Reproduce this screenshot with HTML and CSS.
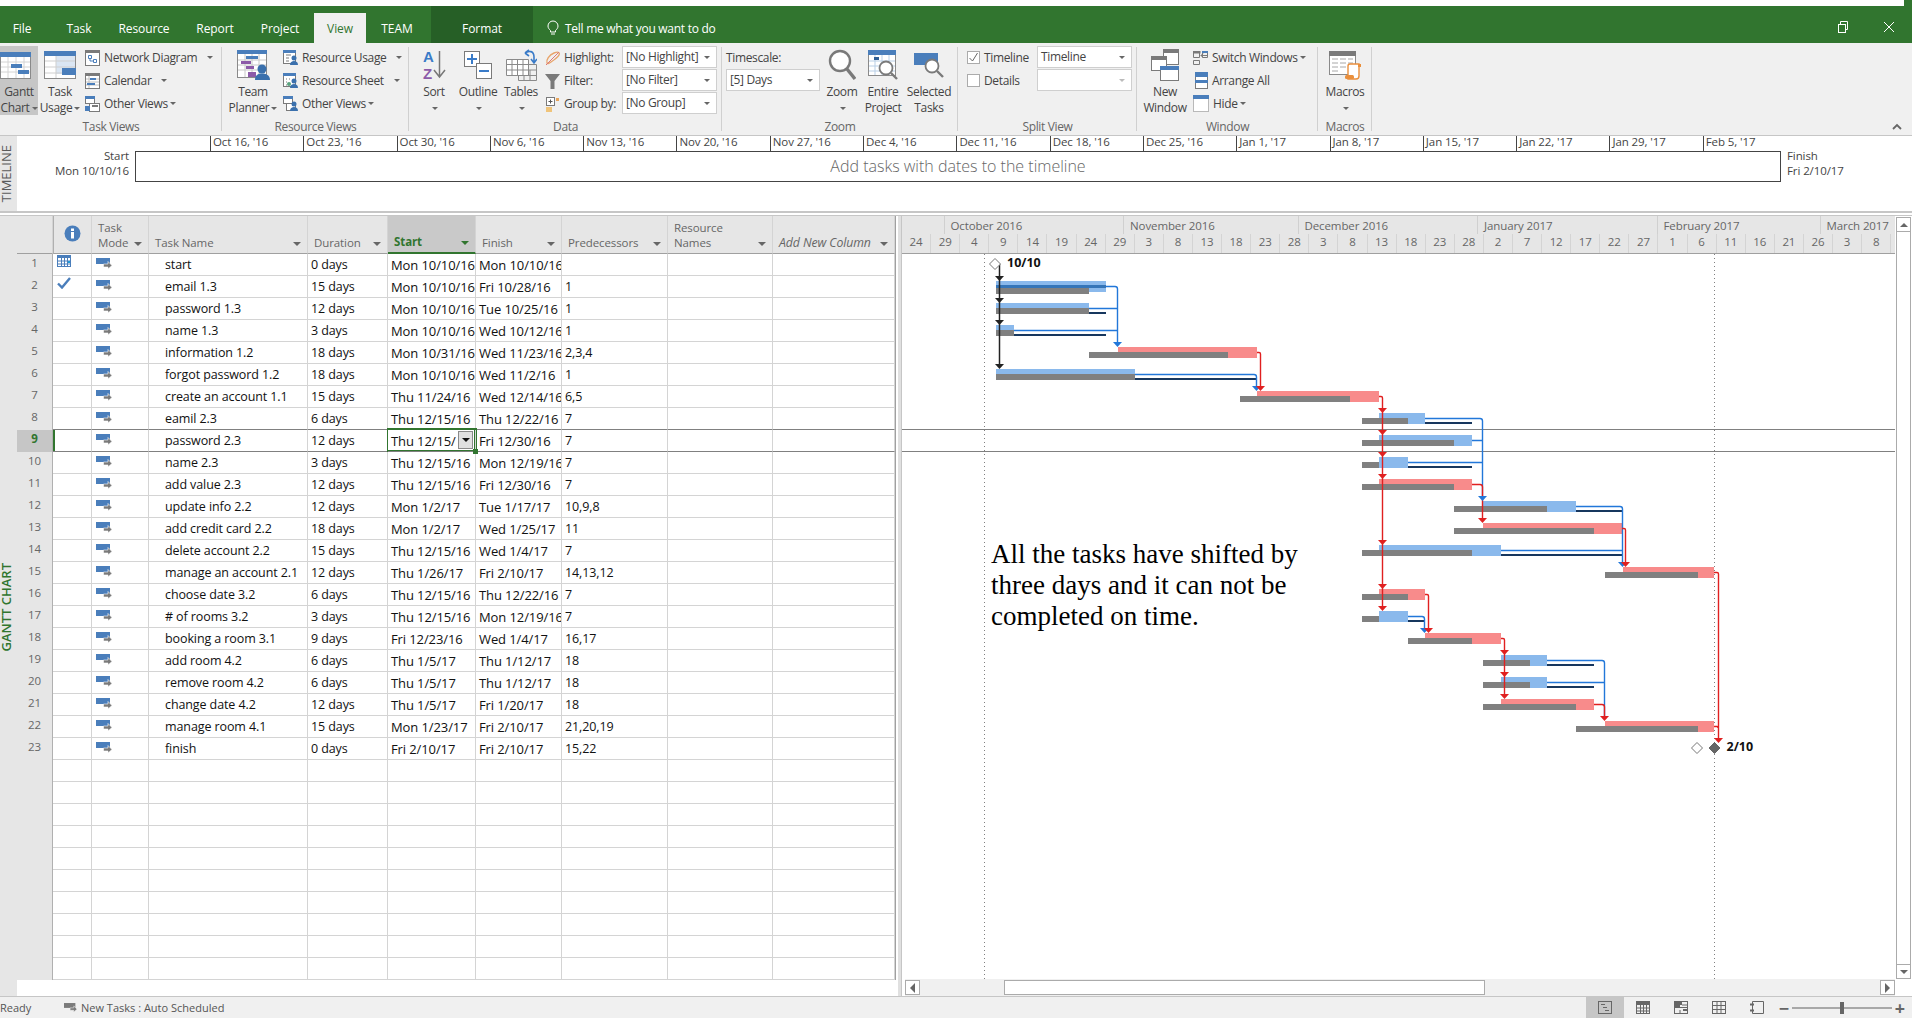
FILE: index.html
```html
<!DOCTYPE html>
<html lang="en">
<head>
<meta charset="utf-8">
<title>Project - Gantt Chart</title>
<link rel="stylesheet" href="styles.css">
</head>
<body>
<svg class="defs" width="0" height="0">
  <symbol id="mode" viewBox="0 0 16 11"><rect width="14" height="6" fill="#4a7ebb"/><path d="M7.500 6h4.500V3.500L16 7.500l-4 3.500V9H7.500z" fill="#7a7a7a" stroke="#fff" stroke-width=".6"/></symbol>
</svg>

<header class="titlebar">
  <div class="topstrip"></div>
  <nav class="tabs">
    <span class="tab t-file">File</span>
    <span class="tab t-task">Task</span>
    <span class="tab t-res">Resource</span>
    <span class="tab t-report">Report</span>
    <span class="tab t-project">Project</span>
    <span class="tab t-view">View</span>
    <span class="tab t-team">TEAM</span>
    <span class="tab t-format">Format</span>
    <span class="tell">
      <svg width="12" height="16" viewBox="0 0 12 16" fill="none" stroke="#fff"><path d="M3.500 10.500C2 9 1 8 1 6a5 5 0 0 1 10 0c0 2-1 3-2.500 4.500v1.500h-5zM4 14h4"/></svg>
      Tell me what you want to do
    </span>
    <span class="winbtns">
      <svg width="12" height="12" viewBox="0 0 12 12" fill="none" stroke="#fff"><rect x="1.500" y="3.500" width="7" height="8"/><path d="M3.500 3.500v-3h7v8h-2"/></svg>
      <svg width="12" height="12" viewBox="0 0 12 12" fill="none" stroke="#fff"><path d="M1 1l10 10M11 1L1 11"/></svg>
    </span>
  </nav>
</header>

<section class="ribbon">
  <div class="grp g1">
    <div class="grp-body">
      <div class="big b-gantt active">
        <div class="ico ico-left"><svg width="31" height="27" viewBox="0 0 31 27"><rect x=".5" y=".5" width="30" height="26" fill="#fff" stroke="#8a8a8a"/><path d="M1 10h29M1 15h29M1 20h29M8 5v21M16 5v21M24 5v21" stroke="#d4d4d4"/><rect width="31" height="5" fill="#4a7ebb"/><rect x="11" y="12" width="11" height="4" fill="#4a7ebb"/><rect x="18" y="18" width="11" height="4" fill="#4a7ebb"/></svg></div>
        <span>Gantt</span><span>Chart<i class="caret"></i></span>
      </div>
      <div class="big b-usage">
        <div class="ico"><svg width="32" height="28" viewBox="0 0 32 28"><rect x=".5" y=".5" width="31" height="27" fill="#fff" stroke="#8a8a8a"/><rect x="12" y="5" width="19" height="18" fill="#dbe6f3"/><path d="M1 10h30M1 16h30M1 22h30M12 5v22" stroke="#cfcfcf"/><rect width="32" height="5" fill="#4a7ebb"/><rect x="18" y="17" width="14" height="7" fill="#4a7ebb"/></svg></div>
        <span>Task</span><span>Usage<i class="caret"></i></span>
      </div>
      <div class="col c-views">
        <div class="sm"><svg class="si" width="15" height="16" viewBox="0 0 15 16"><rect x=".5" y=".5" width="14" height="15" fill="#fff" stroke="#7a7a7a"/><rect width="15" height="3" fill="#7a7a7a"/><path d="M3.500 5.500h3v3h-3zM8.500 9.500h3v3h-3zM5 8.500v2.500h3.500" fill="none" stroke="#4a7ebb"/></svg><span>Network Diagram</span><i class="caret cg"></i></div>
        <div class="sm"><svg class="si" width="15" height="16" viewBox="0 0 15 16"><rect x=".5" y=".5" width="14" height="15" fill="#fff" stroke="#7a7a7a"/><rect width="15" height="3" fill="#7a7a7a"/><path d="M1 6h13M1 9h13M1 12h13M4 3v12" stroke="#c0c0c0"/><rect x="5" y="5" width="6" height="2" fill="#4a7ebb"/><rect x="2" y="10" width="8" height="2" fill="#4a7ebb"/></svg><span>Calendar</span><i class="caret cg"></i></div>
        <div class="sm"><svg class="si" width="15" height="16" viewBox="0 0 15 16"><rect x=".5" y=".5" width="9" height="7" fill="#fff" stroke="#7a7a7a"/><rect width="10" height="3" fill="#4a7ebb"/><rect x="4.500" y="7.500" width="10" height="8" fill="#fff" stroke="#7a7a7a"/><rect x="7" y="9" width="6" height="2" fill="#7a7a7a"/><rect y="10" width="5" height="5" fill="#4a7ebb"/></svg><span>Other Views</span><i class="caret"></i></div>
      </div>
    </div>
    <div class="grp-label">Task Views</div>
  </div>

  <div class="grp g2">
    <div class="grp-body">
      <div class="big b-team">
        <div class="ico"><svg width="33" height="30" viewBox="0 0 33 30"><rect x=".5" y=".5" width="29" height="27" fill="#fff" stroke="#8a8a8a"/><path d="M1 10h28M1 15h28M1 20h28M8 4v23M15 4v23M22 4v23" stroke="#c8c8c8"/><rect width="30" height="4" fill="#4a7ebb"/><rect x="9" y="6" width="12" height="3" fill="#4a7ebb"/><rect x="4" y="11" width="10" height="3" fill="#8c5aa8"/><rect x="9" y="16" width="8" height="3" fill="#8c5aa8"/><rect x="11" y="22" width="8" height="5" fill="#8c5aa8"/><circle cx="25" cy="19" r="4.500" fill="#3a70ad"/><path d="M18 30c0-5 3-6.500 7-6.500s8 1.500 8 6.500z" fill="#3a70ad"/></svg></div>
        <span>Team</span><span>Planner<i class="caret"></i></span>
      </div>
      <div class="col c-res">
        <div class="sm"><svg class="si" width="15" height="16" viewBox="0 0 15 16"><rect x=".5" y=".5" width="12" height="13" fill="#fff" stroke="#7a7a7a"/><rect width="13" height="3" fill="#4a7ebb"/><path d="M3 5h5M3 8h3M3 11h3" stroke="#7a7a7a"/><circle cx="11" cy="8" r="2.500" fill="#3a70ad"/><path d="M7 15c0-3 2-4 4-4s4 1 4 4z" fill="#3a70ad"/></svg><span>Resource Usage</span><i class="caret cg"></i></div>
        <div class="sm"><svg class="si" width="15" height="16" viewBox="0 0 15 16"><rect x=".5" y=".5" width="12" height="13" fill="#fff" stroke="#7a7a7a"/><rect width="13" height="3" fill="#4a7ebb"/><path d="M3 6h1M6 6h1M3 9h1M3 12h1" stroke="#7a7a7a"/><circle cx="11" cy="8" r="2.500" fill="#3a70ad"/><path d="M7 15c0-3 2-4 4-4s4 1 4 4z" fill="#3a70ad"/><circle cx="6" cy="11" r="2" fill="#5aa37f"/></svg><span>Resource Sheet</span><i class="caret cg"></i></div>
        <div class="sm"><svg class="si" width="15" height="16" viewBox="0 0 15 16"><rect x=".5" y=".5" width="9" height="7" fill="#fff" stroke="#7a7a7a"/><rect width="10" height="3" fill="#4a7ebb"/><rect x="3.500" y="7.500" width="9" height="7" fill="#fff" stroke="#7a7a7a"/><circle cx="11" cy="8" r="2.500" fill="#3a70ad"/><path d="M7 15c0-3 2-4 4-4s4 1 4 4z" fill="#3a70ad"/></svg><span>Other Views</span><i class="caret"></i></div>
      </div>
    </div>
    <div class="grp-label">Resource Views</div>
  </div>

  <div class="grp g3">
    <div class="grp-body">
      <div class="big b-sort">
        <div class="ico"><svg class="az-svg" width="24" height="30" viewBox="0 0 24 30"><path d="M17.500 1v25M12 20l5.500 7 5.500-7" fill="none" stroke="#777" stroke-width="1.500"/><text class="az az-a" x="1" y="12">A</text><text class="az az-z" x="1" y="29">Z</text></svg></div>
        <span>Sort</span><span><i class="caret"></i></span>
      </div>
      <div class="big b-outline">
        <div class="ico"><svg width="28" height="28" viewBox="0 0 28 28"><rect x=".5" y=".5" width="15" height="15" fill="#fff" stroke="#7a7a7a"/><rect x="12.500" y="12.500" width="15" height="15" fill="#fff" stroke="#7a7a7a"/><path d="M3 8h10M8 3v10" stroke="#3a7bc8" stroke-width="2"/><path d="M15 20h10" stroke="#3a7bc8" stroke-width="2"/></svg></div>
        <span>Outline</span><span><i class="caret"></i></span>
      </div>
      <div class="big b-tables">
        <div class="ico"><svg width="31" height="32" viewBox="0 0 31 32"><path d="M.5 10.500h22v16h-22zM6 10.500v16M11.500 10.500v16M17 10.500v16M.5 15.500h22M.5 21h22" fill="#fff" stroke="#8a8a8a"/><path d="M12.500 26.500v5h18v-16h-8M18 26.500v5M24 21v10M22.500 21h8M12.500 26.500h18" fill="none" stroke="#8a8a8a"/><path d="M19 4c4-3 9-2 9 4v5M25 10l3 4 3-4M19 4l4-3M19 4l4 3" fill="none" stroke="#3a7bc8" stroke-width="1.600"/></svg></div>
        <span>Tables</span><span><i class="caret"></i></span>
      </div>
      <div class="data">
        <div class="data-row"><svg class="si" width="16" height="16" viewBox="0 0 16 16"><path d="M2 13C1 10 4 5 9 3s6 0 5 2-5 5-8 7-3 2-4 1z" fill="none" stroke="#e8a46a" stroke-width="1.400"/><path d="M1 15L14 2" stroke="#d77" stroke-width="1"/></svg><span class="data-l">Highlight:</span><div class="combo">[No Highlight]<i class="caret cr"></i></div></div>
        <div class="data-row"><svg class="si" width="16" height="16" viewBox="0 0 16 16"><path d="M0 1h15L9.500 8v8h-4V8z" fill="#7a7a7a"/></svg><span class="data-l">Filter:</span><div class="combo">[No Filter]<i class="caret cr"></i></div></div>
        <div class="data-row"><svg class="si" width="16" height="16" viewBox="0 0 16 16"><rect x="1.500" y="1.500" width="8" height="8" fill="#fff" stroke="#7a7a7a"/><path d="M3.500 5.500h4M5.500 3.500v4" stroke="#555"/><rect x="11" y="2" width="3" height="3" fill="#e8a45a"/><rect x="1" y="11" width="6" height="5" fill="#f0c47a"/></svg><span class="data-l">Group by:</span><div class="combo">[No Group]<i class="caret cr"></i></div></div>
      </div>
    </div>
    <div class="grp-label">Data</div>
  </div>

  <div class="grp g4">
    <div class="grp-body">
      <div class="col c-time">
        <div class="sm">Timescale:</div>
        <div class="combo cw">[5] Days<i class="caret cr"></i></div>
      </div>
      <div class="big b-zoom">
        <div class="ico"><svg width="28" height="32" viewBox="0 0 28 32" fill="none"><circle cx="12" cy="12" r="10" fill="#fff" stroke="#7a7a7a" stroke-width="2.400"/><path d="M19 20l8 10" stroke="#7a7a7a" stroke-width="3.400"/></svg></div>
        <span>Zoom</span><span><i class="caret"></i></span>
      </div>
      <div class="big b-entire">
        <div class="ico"><svg width="30" height="30" viewBox="0 0 30 30"><rect x=".5" y=".5" width="27" height="25" fill="#fff" stroke="#8a8a8a"/><path d="M1 11h26M1 16h26M1 21h26M7 5v20M14 5v20M21 5v20" stroke="#b9cfe6"/><rect width="28" height="5" fill="#4a7ebb"/><rect x="6" y="7" width="5" height="3" fill="#2f5f96"/><circle cx="18" cy="18" r="6.500" fill="#fff" stroke="#7a7a7a" stroke-width="1.800"/><path d="M23 23l6 6" stroke="#7a7a7a" stroke-width="2.400"/></svg></div>
        <span>Entire</span><span>Project</span>
      </div>
      <div class="big b-sel">
        <div class="ico"><svg width="30" height="25" viewBox="0 0 30 25"><rect width="24" height="12" fill="#4a7ebb"/><circle cx="18" cy="13" r="6.500" fill="#fff" stroke="#7a7a7a" stroke-width="1.800"/><path d="M23 18l6 6" stroke="#7a7a7a" stroke-width="2.400"/></svg></div>
        <span>Selected</span><span>Tasks</span>
      </div>
    </div>
    <div class="grp-label">Zoom</div>
  </div>

  <div class="grp g5">
    <div class="grp-body">
      <div class="split-grid">
        <div class="chk-row"><span class="chk"><svg width="11" height="11" viewBox="0 0 11 11" fill="none" stroke="#666"><path d="M1.500 6l3 3 5-8"/></svg></span><span class="chk-l">Timeline</span><div class="combo">Timeline<i class="caret cr"></i></div></div>
        <div class="chk-row"><span class="chk"></span><span class="chk-l">Details</span><div class="combo"><i class="caret cr dim"></i></div></div>
      </div>
    </div>
    <div class="grp-label">Split View</div>
  </div>

  <div class="grp g6">
    <div class="grp-body">
      <div class="big b-new">
        <div class="ico"><svg width="28" height="32" viewBox="0 0 28 32"><rect x="12.500" y=".5" width="15" height="15" fill="#fff" stroke="#7a7a7a"/><rect x="12" width="16" height="4" fill="#7a7a7a"/><rect x=".5" y="7.500" width="15" height="14" fill="#fff" stroke="#7a7a7a"/><rect y="7" width="16" height="4" fill="#7a7a7a"/><rect x="9.500" y="17.500" width="18" height="14" fill="#fff" stroke="#7a7a7a"/><rect x="9" y="17" width="19" height="4" fill="#4a7ebb"/></svg></div>
        <span>New</span><span>Window</span>
      </div>
      <div class="col c-win">
        <div class="sm"><svg class="si" width="15" height="14" viewBox="0 0 15 14" fill="none" stroke="#7a7a7a"><path d="M.5.500h6v6h-6zM9.500.500h5v6h-5zM.5 9.500h6v4h-6zM8 4.500h6M8 4.500l2-2M8 4.500l2 2"/><rect x="0" y="0" width="7" height="2" fill="#7a7a7a"/><rect x="9" y="0" width="6" height="2" fill="#4a7ebb" stroke="none"/></svg><span>Switch Windows</span><i class="caret"></i></div>
        <div class="sm"><svg class="si" width="15" height="17" viewBox="0 0 15 17"><rect x="2.500" y=".5" width="12" height="16" fill="#fff" stroke="#7a7a7a"/><rect x="2" width="13" height="5" fill="#4a7ebb"/><rect x="2" y="8" width="13" height="3" fill="#4a7ebb"/></svg><span>Arrange All</span></div>
        <div class="sm"><svg class="si" width="16" height="17" viewBox="0 0 16 17"><rect x=".5" y=".5" width="15" height="16" fill="#fff" stroke="#7a7a7a" stroke-dasharray="1 1"/><rect width="16" height="4" fill="#4a7ebb"/></svg><span>Hide</span><i class="caret"></i></div>
      </div>
    </div>
    <div class="grp-label">Window</div>
  </div>

  <div class="grp g7">
    <div class="grp-body">
      <div class="big b-macros">
        <div class="ico"><svg width="32" height="29" viewBox="0 0 32 29"><rect x=".5" y=".5" width="26" height="23" fill="#fff" stroke="#8a8a8a"/><rect width="27" height="5" fill="#7a7a7a"/><path d="M3 8h6M11 8h6M19 8h5M3 12h6M11 12h6M19 12h5M3 16h6M11 16h6M3 20h6" stroke="#a8a8a8"/><path d="M19 15a2 2 0 0 1 2-2h9v12a3 3 0 0 1-3 3h-8z" fill="#fff" stroke="#ea8f3c" stroke-width="1.400"/><rect x="16" y="24" width="9" height="4" rx="1.500" fill="#ea8f3c"/><rect x="29" y="13" width="3" height="3" fill="#ea8f3c"/></svg></div>
        <span>Macros</span><span><i class="caret"></i></span>
      </div>
    </div>
    <div class="grp-label">Macros</div>
  </div>

  <svg class="collapse" width="10" height="7" viewBox="0 0 10 7" fill="none" stroke="#666" stroke-width="1.800"><path d="M1 6l4-4 4 4"/></svg>
</section>

<section class="timeline">
  <div class="strip"><span class="vert">TIMELINE</span></div>
  <div class="tl-body">
    <div class="tl-scale">
      <span>Oct 16, '16</span><span>Oct 23, '16</span><span>Oct 30, '16</span><span>Nov 6, '16</span><span>Nov 13, '16</span><span>Nov 20, '16</span><span>Nov 27, '16</span><span>Dec 4, '16</span><span>Dec 11, '16</span><span>Dec 18, '16</span><span>Dec 25, '16</span><span>Jan 1, '17</span><span>Jan 8, '17</span><span>Jan 15, '17</span><span>Jan 22, '17</span><span>Jan 29, '17</span><span>Feb 5, '17</span>
    </div>
    <div class="tl-row">
      <div class="tl-start">Start<br>Mon 10/10/16</div>
      <div class="tl-box">Add tasks with dates to the timeline</div>
      <div class="tl-end">Finish<br>Fri 2/10/17</div>
    </div>
  </div>
</section>

<main class="main">
  <div class="strip strip-g"><span class="vert green">GANTT CHART</span></div>
  <div class="sheet">
    <table class="grid">
      <colgroup><col class="w-num"><col class="w-ind"><col class="w-mode"><col class="w-name"><col class="w-dur"><col class="w-start"><col class="w-fin"><col class="w-pred"><col class="w-res"><col class="w-add"></colgroup>
      <thead>
        <tr>
          <th></th>
          <th class="c"><svg width="17" height="17" viewBox="0 0 17 17"><circle cx="8.500" cy="8.500" r="8" fill="#4a7ebb"/><rect x="7" y="7" width="3" height="6.500" fill="#fff"/><rect x="7" y="3.500" width="3" height="2.500" fill="#fff"/></svg></th>
          <th class="wrap"><div class="hd">Task<br>Mode<i class="hc"></i></div></th>
          <th><div class="hd">Task Name<i class="hc"></i></div></th>
          <th><div class="hd">Duration<i class="hc"></i></div></th>
          <th class="sel"><div class="hd">Start<i class="hc hcg"></i></div></th>
          <th><div class="hd">Finish<i class="hc"></i></div></th>
          <th><div class="hd">Predecessors<i class="hc"></i></div></th>
          <th class="wrap"><div class="hd">Resource<br>Names<i class="hc"></i></div></th>
          <th><div class="hd"><em>Add New Column</em><i class="hc"></i></div></th>
        </tr>
      </thead>
      <tbody>
        <tr><td class="n">1</td><td class="ind"><svg width="14" height="12" viewBox="0 0 14 12"><rect x=".5" y=".5" width="13" height="11" fill="#fff" stroke="#4a7ebb"/><rect width="14" height="3" fill="#4a7ebb"/><path d="M4.500 3v8M7.500 3v8M10.500 3v8M1 6h12M1 9h12" stroke="#4a7ebb"/><rect x="11" y="6" width="2" height="2" fill="#1f9ad6"/></svg></td><td class="m"><svg class="mi"><use href="#mode"/></svg></td><td class="t">start</td><td>0 days</td><td>Mon 10/10/16</td><td>Mon 10/10/16</td><td></td><td></td><td></td></tr>
        <tr><td class="n">2</td><td class="ind"><svg width="14" height="12" viewBox="0 0 14 12" fill="none" stroke="#4a7ebb" stroke-width="2.400"><path d="M1 6.500l4 4 8-9.500"/></svg></td><td class="m"><svg class="mi"><use href="#mode"/></svg></td><td class="t">email 1.3</td><td>15 days</td><td>Mon 10/10/16</td><td>Fri 10/28/16</td><td>1</td><td></td><td></td></tr>
        <tr><td class="n">3</td><td></td><td class="m"><svg class="mi"><use href="#mode"/></svg></td><td class="t">password 1.3</td><td>12 days</td><td>Mon 10/10/16</td><td>Tue 10/25/16</td><td>1</td><td></td><td></td></tr>
        <tr><td class="n">4</td><td></td><td class="m"><svg class="mi"><use href="#mode"/></svg></td><td class="t">name 1.3</td><td>3 days</td><td>Mon 10/10/16</td><td>Wed 10/12/16</td><td>1</td><td></td><td></td></tr>
        <tr><td class="n">5</td><td></td><td class="m"><svg class="mi"><use href="#mode"/></svg></td><td class="t">information 1.2</td><td>18 days</td><td>Mon 10/31/16</td><td>Wed 11/23/16</td><td>2,3,4</td><td></td><td></td></tr>
        <tr><td class="n">6</td><td></td><td class="m"><svg class="mi"><use href="#mode"/></svg></td><td class="t">forgot password 1.2</td><td>18 days</td><td>Mon 10/10/16</td><td>Wed 11/2/16</td><td>1</td><td></td><td></td></tr>
        <tr><td class="n">7</td><td></td><td class="m"><svg class="mi"><use href="#mode"/></svg></td><td class="t">create an account 1.1</td><td>15 days</td><td>Thu 11/24/16</td><td>Wed 12/14/16</td><td>6,5</td><td></td><td></td></tr>
        <tr class="before-sel"><td class="n">8</td><td></td><td class="m"><svg class="mi"><use href="#mode"/></svg></td><td class="t">eamil 2.3</td><td>6 days</td><td>Thu 12/15/16</td><td>Thu 12/22/16</td><td>7</td><td></td><td></td></tr>
        <tr class="cur"><td class="n">9</td><td class="first"></td><td class="m"><svg class="mi"><use href="#mode"/></svg></td><td class="t">password 2.3</td><td>12 days</td><td class="active-cell">Thu 12/15/<span class="dd"><i class="ddc"></i></span><span class="handle"></span></td><td>Fri 12/30/16</td><td>7</td><td></td><td></td></tr>
        <tr><td class="n">10</td><td></td><td class="m"><svg class="mi"><use href="#mode"/></svg></td><td class="t">name 2.3</td><td>3 days</td><td>Thu 12/15/16</td><td>Mon 12/19/16</td><td>7</td><td></td><td></td></tr>
        <tr><td class="n">11</td><td></td><td class="m"><svg class="mi"><use href="#mode"/></svg></td><td class="t">add value 2.3</td><td>12 days</td><td>Thu 12/15/16</td><td>Fri 12/30/16</td><td>7</td><td></td><td></td></tr>
        <tr><td class="n">12</td><td></td><td class="m"><svg class="mi"><use href="#mode"/></svg></td><td class="t">update info 2.2</td><td>12 days</td><td>Mon 1/2/17</td><td>Tue 1/17/17</td><td>10,9,8</td><td></td><td></td></tr>
        <tr><td class="n">13</td><td></td><td class="m"><svg class="mi"><use href="#mode"/></svg></td><td class="t">add credit card 2.2</td><td>18 days</td><td>Mon 1/2/17</td><td>Wed 1/25/17</td><td>11</td><td></td><td></td></tr>
        <tr><td class="n">14</td><td></td><td class="m"><svg class="mi"><use href="#mode"/></svg></td><td class="t">delete account 2.2</td><td>15 days</td><td>Thu 12/15/16</td><td>Wed 1/4/17</td><td>7</td><td></td><td></td></tr>
        <tr><td class="n">15</td><td></td><td class="m"><svg class="mi"><use href="#mode"/></svg></td><td class="t">manage an account 2.1</td><td>12 days</td><td>Thu 1/26/17</td><td>Fri 2/10/17</td><td>14,13,12</td><td></td><td></td></tr>
        <tr><td class="n">16</td><td></td><td class="m"><svg class="mi"><use href="#mode"/></svg></td><td class="t">choose date 3.2</td><td>6 days</td><td>Thu 12/15/16</td><td>Thu 12/22/16</td><td>7</td><td></td><td></td></tr>
        <tr><td class="n">17</td><td></td><td class="m"><svg class="mi"><use href="#mode"/></svg></td><td class="t"># of rooms 3.2</td><td>3 days</td><td>Thu 12/15/16</td><td>Mon 12/19/16</td><td>7</td><td></td><td></td></tr>
        <tr><td class="n">18</td><td></td><td class="m"><svg class="mi"><use href="#mode"/></svg></td><td class="t">booking a room 3.1</td><td>9 days</td><td>Fri 12/23/16</td><td>Wed 1/4/17</td><td>16,17</td><td></td><td></td></tr>
        <tr><td class="n">19</td><td></td><td class="m"><svg class="mi"><use href="#mode"/></svg></td><td class="t">add room 4.2</td><td>6 days</td><td>Thu 1/5/17</td><td>Thu 1/12/17</td><td>18</td><td></td><td></td></tr>
        <tr><td class="n">20</td><td></td><td class="m"><svg class="mi"><use href="#mode"/></svg></td><td class="t">remove room 4.2</td><td>6 days</td><td>Thu 1/5/17</td><td>Thu 1/12/17</td><td>18</td><td></td><td></td></tr>
        <tr><td class="n">21</td><td></td><td class="m"><svg class="mi"><use href="#mode"/></svg></td><td class="t">change date 4.2</td><td>12 days</td><td>Thu 1/5/17</td><td>Fri 1/20/17</td><td>18</td><td></td><td></td></tr>
        <tr><td class="n">22</td><td></td><td class="m"><svg class="mi"><use href="#mode"/></svg></td><td class="t">manage room 4.1</td><td>15 days</td><td>Mon 1/23/17</td><td>Fri 2/10/17</td><td>21,20,19</td><td></td><td></td></tr>
        <tr><td class="n">23</td><td></td><td class="m"><svg class="mi"><use href="#mode"/></svg></td><td class="t">finish</td><td>0 days</td><td>Fri 2/10/17</td><td>Fri 2/10/17</td><td>15,22</td><td></td><td></td></tr>
        <tr><td class="n"></td><td></td><td></td><td></td><td></td><td></td><td></td><td></td><td></td><td></td></tr>
        <tr><td class="n"></td><td></td><td></td><td></td><td></td><td></td><td></td><td></td><td></td><td></td></tr>
        <tr><td class="n"></td><td></td><td></td><td></td><td></td><td></td><td></td><td></td><td></td><td></td></tr>
        <tr><td class="n"></td><td></td><td></td><td></td><td></td><td></td><td></td><td></td><td></td><td></td></tr>
        <tr><td class="n"></td><td></td><td></td><td></td><td></td><td></td><td></td><td></td><td></td><td></td></tr>
        <tr><td class="n"></td><td></td><td></td><td></td><td></td><td></td><td></td><td></td><td></td><td></td></tr>
        <tr><td class="n"></td><td></td><td></td><td></td><td></td><td></td><td></td><td></td><td></td><td></td></tr>
        <tr><td class="n"></td><td></td><td></td><td></td><td></td><td></td><td></td><td></td><td></td><td></td></tr>
        <tr><td class="n"></td><td></td><td></td><td></td><td></td><td></td><td></td><td></td><td></td><td></td></tr>
        <tr><td class="n"></td><td></td><td></td><td></td><td></td><td></td><td></td><td></td><td></td><td></td></tr>
      </tbody>
    </table>
  </div>
  <div class="splitter"></div>
  <div class="gantt">
    <div class="gantt-main">
      <div class="g-head">
        <div class="g-months"><span></span><span>October 2016</span><span>November 2016</span><span>December 2016</span><span>January 2017</span><span>February 2017</span><span>March 2017</span></div>
        <div class="g-dates"><span>24</span><span>29</span><span>4</span><span>9</span><span>14</span><span>19</span><span>24</span><span>29</span><span>3</span><span>8</span><span>13</span><span>18</span><span>23</span><span>28</span><span>3</span><span>8</span><span>13</span><span>18</span><span>23</span><span>28</span><span>2</span><span>7</span><span>12</span><span>17</span><span>22</span><span>27</span><span>1</span><span>6</span><span>11</span><span>16</span><span>21</span><span>26</span><span>3</span><span>8</span></div>
      </div>
      <div class="chart">
        <svg class="chart-svg" width="993" height="725" viewBox="902 254 993 725">
          <defs><path id="ah" d="M-4.500 0h9L0 5z"/></defs>
          <path class="dot" d="M984.500 254V979M1714.500 254V979"/>
          <path class="selline" d="M902 429.500H1895M902 451.500H1895"/>

          <rect class="b" x="996" y="281" width="110"/><rect class="g" x="996" y="288" width="93" height="4"/><rect class="p" x="996" y="285" width="110"/>
          <rect class="b" x="996" y="303" width="93"/><rect class="g" x="996" y="308" width="93"/><rect class="k" x="1089" y="312" width="17"/>
          <rect class="b" x="996" y="325" width="18"/><rect class="g" x="996" y="330" width="18"/><rect class="k" x="1014" y="334" width="92"/>
          <rect class="r" x="1118" y="347" width="139"/><rect class="g" x="1089" y="352" width="139"/>
          <rect class="b" x="996" y="369" width="139"/><rect class="g" x="996" y="374" width="139"/><rect class="k" x="1135" y="378" width="122"/>
          <rect class="r" x="1257" y="391" width="122"/><rect class="g" x="1240" y="396" width="110"/>
          <rect class="b" x="1379" y="413" width="46"/><rect class="g" x="1362" y="418" width="46"/><rect class="k" x="1425" y="422" width="47"/>
          <rect class="b" x="1379" y="435" width="93"/><rect class="g" x="1362" y="440" width="92"/>
          <rect class="b" x="1379" y="457" width="29"/><rect class="g" x="1362" y="462" width="17"/><rect class="k" x="1408" y="466" width="64"/>
          <rect class="r" x="1379" y="479" width="93"/><rect class="g" x="1362" y="484" width="92"/>
          <rect class="b" x="1483" y="501" width="93"/><rect class="g" x="1454" y="506" width="93"/><rect class="k" x="1576" y="510" width="46"/>
          <rect class="r" x="1483" y="523" width="139"/><rect class="g" x="1454" y="528" width="140"/>
          <rect class="b" x="1379" y="545" width="122"/><rect class="g" x="1362" y="550" width="110"/><rect class="k" x="1501" y="554" width="121"/>
          <rect class="r" x="1623" y="567" width="91"/><rect class="g" x="1605" y="572" width="93"/>
          <rect class="r" x="1379" y="589" width="46"/><rect class="g" x="1362" y="594" width="46"/>
          <rect class="b" x="1379" y="611" width="29"/><rect class="g" x="1362" y="616" width="17"/><rect class="k" x="1408" y="620" width="16"/>
          <rect class="r" x="1425" y="633" width="76"/><rect class="g" x="1408" y="638" width="64"/>
          <rect class="b" x="1501" y="655" width="46"/><rect class="g" x="1483" y="660" width="47"/><rect class="k" x="1547" y="664" width="47"/>
          <rect class="b" x="1501" y="677" width="46"/><rect class="g" x="1483" y="682" width="47"/><rect class="k" x="1547" y="686" width="47"/>
          <rect class="r" x="1501" y="699" width="93"/><rect class="g" x="1483" y="704" width="93"/>
          <rect class="r" x="1605" y="721" width="109"/><rect class="g" x="1576" y="726" width="122"/>

          <path class="lk" d="M999.500 264V366"/>
          <path class="lb" d="M1106 286.500H1115q2.500 0 2.500 2.500V343M1089 308.500H1117M1014 330.500H1117M1135 374.500H1254q2.500 0 2.500 2.500V387M1425 418.500H1480q2.500 0 2.500 2.500V497M1472 440.500H1482M1408 462.500H1482M1576 506.500H1620q2.500 0 2.500 2.500V563M1501 550.500H1622M1408 616.500H1422q2.500 0 2.500 2.500V629M1547 660.500H1602q2.500 0 2.500 2.500V717M1547 682.500H1604"/>
          <path class="lr" d="M1257 352.500h2q1.500 0 1.500 1.500V387M1379 396.500h2q1.500 0 1.500 1.500V607M1472 484.500H1480q2.500 0 2.500 2.500V519M1622 528.500h2q1.500 0 1.500 1.500V563M1714 572.500h3q1.500 0 1.500 1.500V739M1425 594.500h2q1.500 0 1.500 1.500V629M1501 638.500h2q1.500 0 1.500 1.500V695M1594 704.500H1602q2.500 0 2.500 2.500V717M1714 726.500h3l1.500 1.500"/>

          <g class="ak"><use href="#ah" x="999.500" y="276"/><use href="#ah" x="999.500" y="298"/><use href="#ah" x="999.500" y="320"/><use href="#ah" x="999.500" y="364"/></g>
          <g class="ab"><use href="#ah" x="1117.500" y="342"/><use href="#ah" x="1256.500" y="386"/><use href="#ah" x="1482.500" y="496"/><use href="#ah" x="1622.500" y="562"/><use href="#ah" x="1424.500" y="628"/></g>
          <g class="ar"><use href="#ah" x="1260.500" y="386"/><use href="#ah" x="1382.500" y="408"/><use href="#ah" x="1382.500" y="430"/><use href="#ah" x="1382.500" y="452"/><use href="#ah" x="1382.500" y="474"/><use href="#ah" x="1382.500" y="540"/><use href="#ah" x="1382.500" y="584"/><use href="#ah" x="1382.500" y="606"/><use href="#ah" x="1482.500" y="518"/><use href="#ah" x="1625.500" y="562"/><use href="#ah" x="1428.500" y="628"/><use href="#ah" x="1504.500" y="650"/><use href="#ah" x="1504.500" y="672"/><use href="#ah" x="1504.500" y="694"/><use href="#ah" x="1604.500" y="716"/><use href="#ah" x="1718.500" y="738"/></g>

          <path class="dh" d="M995 258.500l5.500 5.500-5.500 5.500-5.500-5.500z"/>
          <path class="dh" d="M1697 742.500l5.500 5.500-5.500 5.500-5.500-5.500z"/>
          <path class="df" d="M1714.500 742.500l5.500 5.500-5.500 5.500-5.500-5.500z"/>
          <text class="ms" x="1007" y="267">10/10</text>
          <text class="ms" x="1726.500" y="751">2/10</text>
        </svg>
        <p class="note">All the tasks have shifted by<br>three days and it can not be<br>completed on time.</p>
      </div>
      <div class="hscroll">
        <span class="sbtn"><i class="tri-l"></i></span>
        <span class="hspace1"></span>
        <span class="hthumb"></span>
        <span class="hspace2"></span>
        <span class="sbtn"><i class="tri-r"></i></span>
      </div>
    </div>
    <div class="vscroll">
      <span class="sbtn"><i class="tri-u"></i></span>
      <span class="vthumb"></span>
      <span class="sbtn"><i class="tri-d"></i></span>
    </div>
  </div>
</main>

<footer class="status">
  <span class="st-ready">Ready</span>
  <svg class="st-ico" width="13" height="11" viewBox="0 0 16 11"><rect width="14" height="6" fill="#7a7a7a"/><path d="M7.500 6h4.500V3.500L16 7.500l-4 3.500V9H7.500z" fill="#7a7a7a" stroke="#f0f0f0" stroke-width=".6"/></svg>
  <span class="st-new">New Tasks : Auto Scheduled</span>
  <div class="st-right">
    <span class="vb vb-on"><svg width="14" height="13" viewBox="0 0 14 13" fill="none" stroke="#666"><rect x=".5" y=".5" width="13" height="12"/><path d="M3 3.500h4M5 6.500h4M7 9.500h4"/></svg></span>
    <span class="vb"><svg width="14" height="13" viewBox="0 0 14 13" fill="none" stroke="#666"><rect x=".5" y=".5" width="13" height="12"/><path d="M1 2.500h12" stroke-width="3"/><path d="M1 7h12M1 10h12M4.500 4v8M7.500 4v8M10.500 4v8"/></svg></span>
    <span class="vb"><svg width="14" height="13" viewBox="0 0 14 13" fill="none" stroke="#666"><rect x=".5" y=".5" width="13" height="12"/><path d="M1 2.500h7" stroke-width="3"/><path d="M1 6.500h12M6 9v3M8 4h5"/><path d="M9 9h4" stroke-width="2"/><rect x="1" y="4" width="5" height="2" fill="#666" stroke="none"/></svg></span>
    <span class="vb"><svg width="14" height="13" viewBox="0 0 14 13" fill="none" stroke="#666"><rect x=".5" y=".5" width="13" height="12"/><path d="M1 4.500h12M1 8.500h12M5 1v11M9 1v11"/></svg></span>
    <span class="vb"><svg width="14" height="13" viewBox="0 0 14 13" fill="none" stroke="#666"><path d="M2.500.500h11v12h-11z"/><path d="M0 3.500h4M0 9.500h4" stroke-width="2"/></svg></span>
    <span class="zm">&minus;</span>
    <span class="slider"><i class="knob"></i></span>
    <span class="zm">+</span>
  </div>
</footer>
</body>
</html>
```

FILE: styles.css
```css
* { box-sizing: border-box; }
html, body { margin: 0; padding: 0; height: 1018px; overflow: hidden; background: #fff; }
body { font-family: "Open Sans", "Noto Sans", sans-serif; font-size: 12px; color: #444; letter-spacing: -.35px; }
.defs { position: absolute; }

/* title bar */
.titlebar { height: 43px; background: #31752f; color: #fff; }
.topstrip { width: 1904px; height: 6px; background: #fff; }
.tabs { display: flex; height: 37px; align-items: flex-end; font-size: 12px; letter-spacing: -.1px; }
.tab { height: 30px; display: flex; align-items: center; justify-content: center; flex: none; }
.t-file { width: 44px; }
.t-task { width: 70px; }
.t-res { width: 60px; }
.t-report { width: 82px; }
.t-project { width: 48px; margin-right: 10px; }
.t-view { width: 52px; background: #f0f0f0; color: #31752f; }
.t-team { width: 62px; margin-right: 3px; }
.t-format { width: 102px; height: 37px; padding-top: 7px; background: #265f26; }
.tell { height: 30px; margin-left: 14px; display: flex; align-items: center; gap: 6px; letter-spacing: -.27px; }
.winbtns { height: 30px; margin-left: auto; display: flex; align-items: center; gap: 34px; padding-right: 17px; padding-bottom: 3px; }

/* ribbon */
.ribbon { position: relative; display: flex; height: 93px; background: #f0f0f0; border-bottom: 1px solid #c6c6c6; }
.grp { position: relative; display: flex; flex-direction: column; flex: none; }
.grp::after { content: ""; position: absolute; right: 0; top: 4px; bottom: 4px; width: 1px; background: #d0d0d0; }
.g1 { width: 222px; }
.g2 { width: 187px; }
.g3 { width: 313px; }
.g4 { width: 236px; }
.g5 { width: 179px; }
.g6 { width: 181px; }
.g7 { width: 54px; }
.grp-body { display: flex; height: 73px; padding-top: 3px; }
.grp-label { height: 19px; line-height: 21px; text-align: center; color: #666; }
.g2 .grp-body { padding-left: 5px; }
.g3 .grp-body { padding-left: 7px; }
.g4 .grp-body { padding-left: 4px; }
.g5 .grp-body { padding-left: 9px; }
.g6 .grp-body { padding-left: 3px; }

.big { flex: none; height: 69px; display: flex; flex-direction: column; align-items: center; line-height: 16px; white-space: nowrap; }
.big span { height: 16px; }
.ico { height: 38px; width: 100%; flex: none; display: flex; justify-content: center; align-items: center; }
.ico-left { justify-content: flex-start; }
.active { background: #c6c6c6; }
.b-gantt { width: 38px; }
.b-usage { width: 42px; margin-left: 1px; }
.b-team { width: 52px; }
.b-sort { width: 36px; }
.b-outline { width: 44px; margin-left: 4px; }
.b-tables { width: 40px; margin-left: 1px; }
.b-zoom { width: 36px; margin-left: 4px; }
.b-entire { width: 42px; margin-left: 2px; }
.b-sel { width: 48px; margin-left: 1px; }
.b-new { width: 50px; }
.b-macros { width: 54px; }
.az-svg { overflow: visible; }
.az { font-size: 15px; font-weight: 700; font-family: "Liberation Sans", sans-serif; letter-spacing: 0; }
.az-a { fill: #3a7bc8; }
.az-z { fill: #8c5aa8; }

.caret { display: inline-block; width: 0; height: 0; margin-left: 2px; vertical-align: middle; border-top: 3px solid #666; border-left: 3px solid transparent; border-right: 3px solid transparent; }
.cg { margin-left: 10px; }
.cr { position: absolute; right: 6px; top: 9px; margin: 0; }
.dim { border-top-color: #bbb; }

.col { display: flex; flex-direction: column; flex: none; }
.c-views { margin-left: 4px; }
.c-res { margin-left: 4px; }
.c-win { margin-left: 3px; }
.c-time { width: 94px; gap: 0; }
.sm { height: 23px; display: flex; align-items: center; white-space: nowrap; }
.si { flex: none; margin-right: 4px; }
.data { margin-left: 4px; display: flex; flex-direction: column; }
.data-row { height: 23px; display: flex; align-items: flex-start; }
.data-row .si { margin: 4px 3px 0 0; }
.data-l { width: 58px; line-height: 23px; white-space: nowrap; }
.combo { position: relative; width: 95px; height: 22px; line-height: 20px; padding-left: 3px; background: #fff; border: 1px solid #cfcfcf; white-space: nowrap; }
.cw { width: 94px; }
.split-grid { display: flex; flex-direction: column; }
.chk-row { height: 23px; display: flex; align-items: flex-start; }
.chk { width: 13px; height: 13px; margin-top: 5px; background: #fff; border: 1px solid #ababab; flex: none; display: flex; align-items: center; justify-content: center; }
.chk-l { width: 57px; padding-left: 4px; line-height: 23px; }
.collapse { position: absolute; right: 10px; bottom: 5px; }

/* timeline */
.timeline { display: flex; height: 77px; border-bottom: 2px solid #c6c6c6; }
.strip { width: 17px; flex: none; background: #e6e6e6; display: flex; align-items: center; }
.vert { writing-mode: vertical-rl; transform: rotate(180deg); font-size: 13px; line-height: 12px; color: #5a5a5a; white-space: nowrap; letter-spacing: 0; }
.green { color: #31752f; font-weight: 600; }
.tl-body { flex: 1; min-width: 0; }
.tl-scale { height: 15px; display: flex; padding-left: 193px; letter-spacing: -.1px; }
.tl-scale span { width: 93.3px; flex: none; border-left: 1px solid #444; padding-left: 2px; line-height: 12px; color: #444; font-size: 11.5px; white-space: nowrap; }
.tl-row { display: flex; line-height: 15px; letter-spacing: -.1px; font-size: 11.5px; }
.tl-start { width: 112px; text-align: right; margin: -3px 6px 0 0; }
.tl-box { width: 1646px; height: 31px; border: 1px solid #444; display: flex; align-items: center; justify-content: center; font-size: 16px; font-weight: 300; color: #666; letter-spacing: 0; }
.tl-end { padding-left: 6px; margin-top: -3px; }

/* main */
.main { display: flex; height: 781px; margin-top: 2px; border-top: 1px solid #c6c6c6; }
.strip-g { height: 780px; }
.strip-g .vert { margin-top: 2px; }
.sheet { width: 879px; height: 764px; flex: none; overflow: hidden; border-right: 1px solid #a0a0a0; position: relative; }
.grid { width: 878px; table-layout: fixed; border-collapse: separate; border-spacing: 0; font-size: 12.5px; color: #111; letter-spacing: -.1px; }
.w-num { width: 36px; }
.w-ind { width: 39px; }
.w-mode { width: 57px; }
.w-name { width: 159px; }
.w-dur { width: 80px; }
.w-start { width: 88px; }
.w-fin { width: 86px; }
.w-pred { width: 106px; }
.w-res { width: 105px; }
.w-add { width: 122px; }
.grid th { height: 38px; padding: 0; background: #e6e6e6; border-right: 1px solid #d4d4d4; border-bottom: 1px solid #a0a0a0; font-weight: 400; text-align: left; color: #666; font-size: 11.5px; vertical-align: bottom; }
.grid th em { font-size: 12.3px; }
.grid th.c { vertical-align: middle; text-align: center; border-left: 1px solid #b0b0b0; }
.grid th.sel { background: #c9c9c9; color: #31752f; font-weight: 700; border-bottom: 2px solid #31752f; }
.hd { position: relative; padding: 0 0 3px 6px; line-height: 14.5px; white-space: nowrap; }
.hc { position: absolute; right: 6px; bottom: 7px; width: 0; height: 0; border-top: 4px solid #666; border-left: 4px solid transparent; border-right: 4px solid transparent; }
.hcg { border-top-color: #31752f; }
.grid td { height: 22px; padding: 1px 0 0 3px; border-right: 1px solid #d4d4d4; border-bottom: 1px solid #d4d4d4; white-space: nowrap; overflow: hidden; line-height: 20px; }
.grid td:nth-child(6), .grid td:nth-child(7) { font-size: 13px; }
.grid td.n { padding: 0 0 5px; line-height: 16px; background: #e6e6e6; border-right: 1px solid #b0b0b0; border-bottom: 0; text-align: center; color: #666; font-size: 11.5px; }
.grid td.ind { padding: 0 0 5px 4px; line-height: 14px; vertical-align: middle; }
.grid td.m { padding: 0 0 3px 4px; line-height: 11px; }
.mi { width: 16px; height: 11px; display: block; }
.grid td.t { padding-left: 16px; }
.before-sel td { border-bottom-color: #808080; }
.cur td { border-bottom-color: #808080; }
.cur td.n { background: #c6c6c6; color: #31752f; font-weight: 700; }
.cur td.first { box-shadow: inset 2px 0 0 #31752f; }
.grid td.active-cell { position: relative; overflow: visible; box-shadow: 0 -1px 0 1px #31752f, inset -1px -1px 0 #31752f; }
.dd { position: absolute; right: 2px; top: 1px; width: 15px; height: 18px; background: #e0e0e0; border: 1px solid #8a8a8a; display: flex; align-items: center; justify-content: center; }
.ddc { width: 0; height: 0; border-top: 4px solid #111; border-left: 4px solid transparent; border-right: 4px solid transparent; }
.handle { position: absolute; right: -3px; bottom: -3px; width: 5px; height: 5px; background: #31752f; z-index: 2; }

.splitter { width: 6px; flex: none; background: #e0e0e0; border-left: 2px solid #fff; border-right: 1px solid #c6c6c6; }
.gantt { flex: 1; min-width: 0; display: flex; }
.gantt-main { width: 993px; flex: none; display: flex; flex-direction: column; }
.g-head { height: 38px; background: #e6e6e6; border-bottom: 1px solid #a0a0a0; color: #666; font-size: 11.5px; letter-spacing: -.1px; }
.g-months { height: 18px; display: grid; grid-template-columns: 41.5px 179.5px 174.5px 179.5px 179.5px 163px 1fr; }
.g-months span { padding: 2px 0 0 6px; line-height: 15px; white-space: nowrap; border-left: 1px solid #d0d0d0; }
.g-months span:first-child { border-left: 0; }
.g-dates { height: 19px; display: grid; grid-template-columns: repeat(34, 29.1px); }
.g-dates span { text-align: center; line-height: 16px; border-right: 1px solid #d4d4d4; }
.chart { position: relative; height: 725px; }
.chart-svg { display: block; }
.b { fill: #8ab9ec; height: 11px; }
.r { fill: #f88b8b; height: 11px; }
.g { fill: #808080; height: 6px; }
.p { fill: #3575b8; height: 3px; }
.k { fill: #17375e; height: 2px; }
.dot { stroke: #808080; stroke-dasharray: 1 3; fill: none; }
.selline { stroke: #808080; fill: none; }
.lk { stroke: #222; stroke-width: 1.5; fill: none; }
.lb { stroke: #2277d9; stroke-width: 1.4; fill: none; }
.lr { stroke: #e02020; stroke-width: 1.4; fill: none; }
.ak { fill: #222; }
.ab { fill: #2277d9; }
.ar { fill: #e02020; }
.dh { fill: #fff; stroke: #777; }
.df { fill: #666; stroke: #666; }
.ms { font: 700 12.5px "Open Sans", sans-serif; fill: #111; letter-spacing: 0; }
.note { position: absolute; left: 89px; top: 285px; margin: 0; font-family: "Liberation Serif", serif; font-size: 27px; line-height: 31px; color: #000; letter-spacing: 0; white-space: nowrap; }

.hscroll { height: 17px; margin-left: 3px; display: flex; padding: 1px 0; background: #f0f0f0; }
.sbtn { width: 15px; height: 15px; flex: none; background: #fff; border: 1px solid #ababab; display: flex; align-items: center; justify-content: center; }
.hspace1 { width: 84px; flex: none; }
.hthumb { width: 481px; flex: none; background: #fff; border: 1px solid #ababab; }
.hspace2 { flex: 1; }
.vscroll { width: 17px; flex: none; padding: 1px; display: flex; flex-direction: column; height: 764px; }
.vthumb { flex: 1; border: 1px solid #ababab; border-top: 0; border-bottom: 0; background: #fff; }
.tri-l, .tri-r, .tri-u, .tri-d { width: 0; height: 0; }
.tri-l { border-right: 5px solid #666; border-top: 5px solid transparent; border-bottom: 5px solid transparent; }
.tri-r { border-left: 5px solid #666; border-top: 5px solid transparent; border-bottom: 5px solid transparent; }
.tri-u { border-bottom: 4px solid #666; border-left: 4px solid transparent; border-right: 4px solid transparent; }
.tri-d { border-top: 4px solid #666; border-left: 4px solid transparent; border-right: 4px solid transparent; }

/* status */
.status { height: 22px; display: flex; align-items: center; background: #f0f0f0; border-top: 1px solid #c6c6c6; color: #555; font-size: 11px; letter-spacing: 0; }
.st-ready { width: 64px; }
.st-ico { margin-right: 4px; flex: none; }
.st-new { white-space: nowrap; }
.st-right { margin-left: auto; height: 21px; display: flex; align-items: center; }
.vb { width: 38px; height: 21px; display: flex; align-items: center; justify-content: center; }
.vb-on { background: #c6c6c6; }
.zm { width: 16px; text-align: center; font-size: 18px; font-weight: 700; line-height: 18px; color: #666; }
.slider { position: relative; width: 100px; height: 2px; background: #a8a8a8; }
.knob { position: absolute; left: 48px; top: -5px; width: 4px; height: 12px; background: #666; }
.st-right .zm:last-child { margin-right: 4px; }
```
